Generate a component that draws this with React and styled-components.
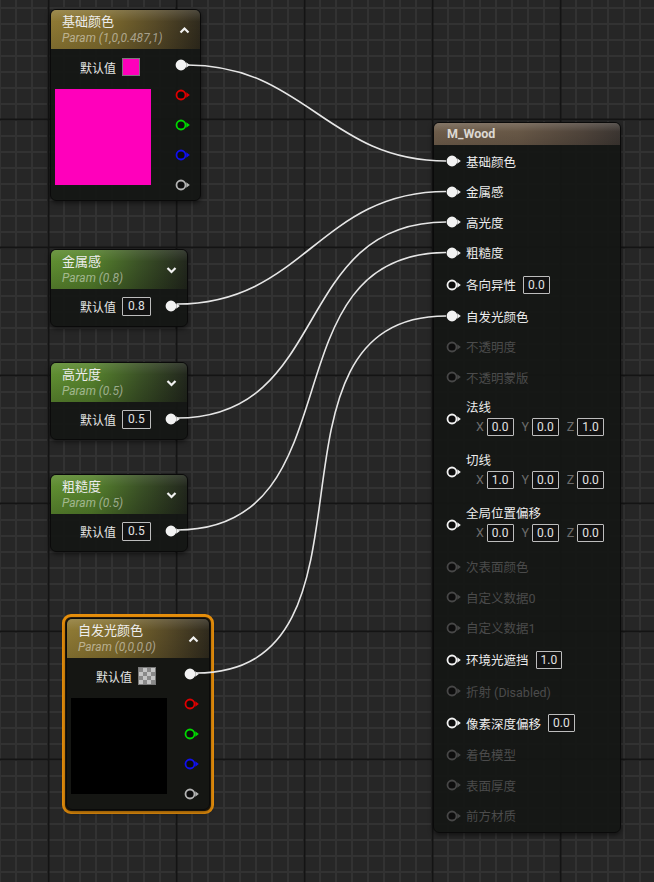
import React from 'react';
import styled, { createGlobalStyle, css } from 'styled-components';

const GlobalStyle = createGlobalStyle`
  html, body {
    margin: 0;
    padding: 0;
    background: #262626;
  }
  body {
    font-family: Roboto, "Noto Sans CJK SC", sans-serif;
    color: #e6e6e6;
  }
`;

const Canvas = styled.div`
  position: relative;
  width: 654px;
  height: 882px;
  overflow: hidden;
  background-color: #262626;
  background-image:
    linear-gradient(to right, #141414 0 2px, transparent 2px),
    linear-gradient(to bottom, #141414 0 2px, transparent 2px),
    linear-gradient(to right, #323232 0 2px, transparent 2px),
    linear-gradient(to bottom, #323232 0 2px, transparent 2px);
  background-size: 128px 128px, 128px 128px, 16px 16px, 16px 16px;
  background-position: 47.5px 0, 0 118.5px, 15px 0, 0 7px;
`;

const Wires = styled.svg`
  position: absolute;
  inset: 0;
  z-index: 5;
  pointer-events: none;
`;

const Node = styled.div`
  position: absolute;
  left: ${({ $x }) => $x}px;
  top: ${({ $y }) => $y}px;
  width: ${({ $w }) => $w}px;
  box-sizing: border-box;
  border: 1px solid #0a0a0a;
  border-radius: 6px;
  background: rgba(20, 22, 20, 0.94);
  box-shadow: 0 2px 5px rgba(0, 0, 0, 0.55);
  overflow: hidden;
`;

const Selected = styled.div`
  position: absolute;
  left: ${({ $x }) => $x}px;
  top: ${({ $y }) => $y}px;
  box-sizing: border-box;
  padding: 1px;
  border: 3px solid #e8900c;
  border-radius: 9px;
  background: #2a1e0c;

  ${Node} {
    position: static;
  }
`;

const tones = {
  gold: css`
    background:
      linear-gradient(180deg, rgba(255, 255, 255, 0.14) 0, rgba(255, 255, 255, 0) 30%, rgba(0, 0, 0, 0.12) 100%),
      linear-gradient(90deg, #8e7934 0%, #7f6c2e 35%, #574a27 70%, #2f2a1d 100%);
  `,
  green: css`
    background:
      linear-gradient(180deg, rgba(255, 255, 255, 0.1) 0, rgba(255, 255, 255, 0) 30%, rgba(0, 0, 0, 0.18) 100%),
      linear-gradient(90deg, #5f8d31 0%, #56822d 30%, #3b5226 65%, #22271d 100%);
  `,
  brown: css`
    background:
      linear-gradient(180deg, rgba(255, 255, 255, 0.16) 0, rgba(255, 255, 255, 0) 40%, rgba(0, 0, 0, 0.1) 100%),
      linear-gradient(90deg, #6d5c4a 0%, #675746 45%, #4e433a 80%, #3b3531 100%);
  `,
};

const Header = styled.div`
  display: flex;
  align-items: center;
  justify-content: space-between;
  box-sizing: border-box;
  height: ${({ $h }) => $h || 39}px;
  padding: 0 ${({ $pr }) => $pr ?? 10}px 0 ${({ $pl }) => $pl ?? 11}px;
  ${({ $tone }) => tones[$tone]}
`;

const Titles = styled.div`
  display: flex;
  flex-direction: column;
  padding-top: 1px;
`;

const Title = styled.div`
  font-size: 13px;
  line-height: 16px;
  color: #ededed;
  ${({ $bold }) =>
    $bold &&
    css`
      font-weight: 700;
      font-size: 12.5px;
      color: #dcd8d2;
    `}
`;

const Sub = styled.div`
  font-size: 12px;
  line-height: 16px;
  font-style: italic;
  color: rgba(255, 255, 255, 0.48);
`;

const Chevron = ({ up }) => (
  <svg width="11" height="8" viewBox="0 0 11 8">
    <polyline
      points={up ? '1.5,6.5 5.5,2.5 9.5,6.5' : '1.5,2 5.5,6 9.5,2'}
      fill="none"
      stroke="#f2f2f2"
      strokeWidth="2.2"
    />
  </svg>
);

const PinSvg = styled.svg`
  flex: none;
  display: block;
`;

const Pin = ({ color = '#f2f2f2', filled = false }) => (
  <PinSvg width="16" height="12" viewBox="0 0 16 12">
    <circle cx="6" cy="6" r="4.5" fill={filled ? color : '#0d0d0d'} stroke={color} strokeWidth="1.8" />
    <path d="M11.3 3.2 L14.8 6 L11.3 8.8 Z" fill={color} />
  </PinSvg>
);

/* colour parameter nodes */
const ColorBody = styled.div`
  display: flex;
  padding: 0 9px 0 4px;
`;

const PreviewCol = styled.div`
  display: flex;
  flex-direction: column;
`;

const DefaultRow = styled.div`
  display: flex;
  align-items: center;
  gap: 6px;
  height: 20px;
  margin-top: 8px;
  padding-left: 25px;
`;

const Label = styled.span`
  font-size: 12px;
  color: #e4e4e4;
  white-space: nowrap;
`;

const Swatch = styled.div`
  width: 18px;
  height: 18px;
  box-sizing: border-box;
  border: 1px solid #7a7a7a;
  background: ${({ $color }) => $color};
  ${({ $checker }) =>
    $checker &&
    css`
      background: repeating-conic-gradient(#c4c4c4 0 25%, #8a8a8a 0 50%) 0 0 / 8px 8px;
    `}
`;

const Preview = styled.div`
  width: 96px;
  height: 96px;
  margin-top: 12px;
  background: ${({ $color }) => $color};
`;

const PinCol = styled.div`
  display: flex;
  flex-direction: column;
  margin-left: auto;
  padding-top: 1px;
`;

const PinSlot = styled.div`
  display: flex;
  align-items: center;
  height: 30px;
`;

/* scalar parameter nodes */
const ScalarRow = styled.div`
  display: flex;
  align-items: center;
  gap: 6px;
  height: 22px;
  padding: 6px 6px 9px 29px;
`;

const ValueBox = styled.div`
  box-sizing: border-box;
  height: ${({ $h }) => $h || 18}px;
  padding: 0 ${({ $px }) => $px ?? 4}px;
  border: 1px solid #bdbdbd;
  border-radius: 1px;
  background: #121212;
  font-size: 12px;
  line-height: ${({ $h }) => ($h || 18) - 2}px;
  color: #e2e2e2;
`;

const PushRight = styled.div`
  margin-left: auto;
`;

/* material result node */
const InputList = styled.div`
  display: flex;
  flex-direction: column;
  padding: 1px 0 1px;
`;

const InputRow = styled.div`
  display: flex;
  align-items: center;
  gap: 4px;
  height: ${({ $tall }) => ($tall ? 33 : 30.5)}px;
  padding-left: 12px;
  font-size: 12.5px;
  color: ${({ $dim }) => ($dim ? '#4b4b4b' : '#ececec')};
  white-space: nowrap;
`;

const RowValue = styled.div`
  margin-left: 3px;
`;

const VectorRow = styled.div`
  display: flex;
  align-items: center;
  gap: 4px;
  height: 53px;
  padding-left: 12px;
  box-sizing: border-box;
`;

const VectorText = styled.div`
  display: flex;
  flex-direction: column;
  gap: 2px;
  align-self: flex-start;
  padding-top: 7.5px;
  font-size: 12.5px;
  line-height: 16px;
  color: #ececec;
`;

const Components = styled.div`
  display: flex;
  align-items: center;
  height: 18px;
  margin-left: 10px;
`;

const Axis = styled.span`
  font-size: 12.5px;
  color: #6c6c6c;
  margin: 0 3px 0 ${({ $first }) => ($first ? 0 : 8)}px;
`;

const WHITE = '#f2f2f2';
const DIM = '#474747';

const ColorNode = ({ x, y, w, title, sub, color, checker, up = true }) => (
  <Node $x={x} $y={y} $w={w}>
    <Header $tone="gold">
      <Titles>
        <Title>{title}</Title>
        <Sub>{sub}</Sub>
      </Titles>
      <Chevron up={up} />
    </Header>
    <ColorBody>
      <PreviewCol>
        <DefaultRow>
          <Label>默认值</Label>
          <Swatch $color={color} $checker={checker} />
        </DefaultRow>
        <Preview $color={color} />
      </PreviewCol>
      <PinCol>
        <PinSlot><Pin filled /></PinSlot>
        <PinSlot><Pin color="#e00000" /></PinSlot>
        <PinSlot><Pin color="#00d800" /></PinSlot>
        <PinSlot><Pin color="#1010f0" /></PinSlot>
        <PinSlot><Pin color="#b4b4b4" /></PinSlot>
      </PinCol>
    </ColorBody>
  </Node>
);

const ScalarNode = ({ x, y, title, value }) => (
  <Node $x={x} $y={y} $w={138}>
    <Header $tone="green">
      <Titles>
        <Title>{title}</Title>
        <Sub>Param ({value})</Sub>
      </Titles>
      <Chevron />
    </Header>
    <ScalarRow>
      <Label>默认值</Label>
      <ValueBox $h={19} $px={5}>{value}</ValueBox>
      <PushRight>
        <Pin filled />
      </PushRight>
    </ScalarRow>
  </Node>
);

const Input = ({ label, on, dim, value }) => (
  <InputRow $tall={!!value} $dim={dim}>
    <Pin color={dim ? DIM : WHITE} filled={on} />
    <span>{label}</span>
    {value && (
      <RowValue>
        <ValueBox>{value}</ValueBox>
      </RowValue>
    )}
  </InputRow>
);

const Vector = ({ label, values }) => (
  <VectorRow>
    <Pin />
    <VectorText>
      <span>{label}</span>
      <Components>
        {['X', 'Y', 'Z'].map((axis, i) => (
          <React.Fragment key={axis}>
            <Axis $first={i === 0}>{axis}</Axis>
            <ValueBox>{values[i]}</ValueBox>
          </React.Fragment>
        ))}
      </Components>
    </VectorText>
  </VectorRow>
);

const wire = ([x0, y0], [x1, y1]) => {
  const t = (Math.abs(x1 - x0) + Math.abs(y1 - y0)) / 3;
  return `M${x0} ${y0} C${x0 + t} ${y0} ${x1 - t} ${y1} ${x1} ${y1}`;
};

const links = [
  [[187, 65], [446, 161]],
  [[177, 304], [446, 191.5]],
  [[177, 418], [446, 222]],
  [[177, 530], [446, 252.5]],
  [[196, 673], [446, 316]],
];

export default function App() {
  return (
    <>
      <GlobalStyle />
      <Canvas>
        <ColorNode x={50} y={9} w={151} title="基础颜色" sub="Param (1,0,0.487,1)" color="#ff00bb" />
        <ScalarNode x={50} y={249} title="金属感" value="0.8" />
        <ScalarNode x={50} y={362} title="高光度" value="0.5" />
        <ScalarNode x={50} y={474} title="粗糙度" value="0.5" />

        <Selected $x={62} $y={614}>
          <ColorNode w={144} title="自发光颜色" sub="Param (0,0,0,0)" color="#000000" checker />
        </Selected>

        <Node $x={433} $y={122} $w={188}>
          <Header $tone="brown" $h={22} $pl={13}>
            <Title $bold>M_Wood</Title>
          </Header>
          <InputList>
            <Input label="基础颜色" on />
            <Input label="金属感" on />
            <Input label="高光度" on />
            <Input label="粗糙度" on />
            <Input label="各向异性" value="0.0" />
            <Input label="自发光颜色" on />
            <Input label="不透明度" dim />
            <Input label="不透明蒙版" dim />
            <Vector label="法线" values={['0.0', '0.0', '1.0']} />
            <Vector label="切线" values={['1.0', '0.0', '0.0']} />
            <Vector label="全局位置偏移" values={['0.0', '0.0', '0.0']} />
            <Input label="次表面颜色" dim />
            <Input label="自定义数据0" dim />
            <Input label="自定义数据1" dim />
            <Input label="环境光遮挡" value="1.0" />
            <Input label="折射 (Disabled)" dim />
            <Input label="像素深度偏移" value="0.0" />
            <Input label="着色模型" dim />
            <Input label="表面厚度" dim />
            <Input label="前方材质" dim />
          </InputList>
        </Node>

        <Wires width="654" height="882">
          {links.map(([a, b], i) => (
            <path key={i} d={wire(a, b)} fill="none" stroke="#e6e6e6" strokeWidth="1.6" />
          ))}
        </Wires>
      </Canvas>
    </>
  );
}
